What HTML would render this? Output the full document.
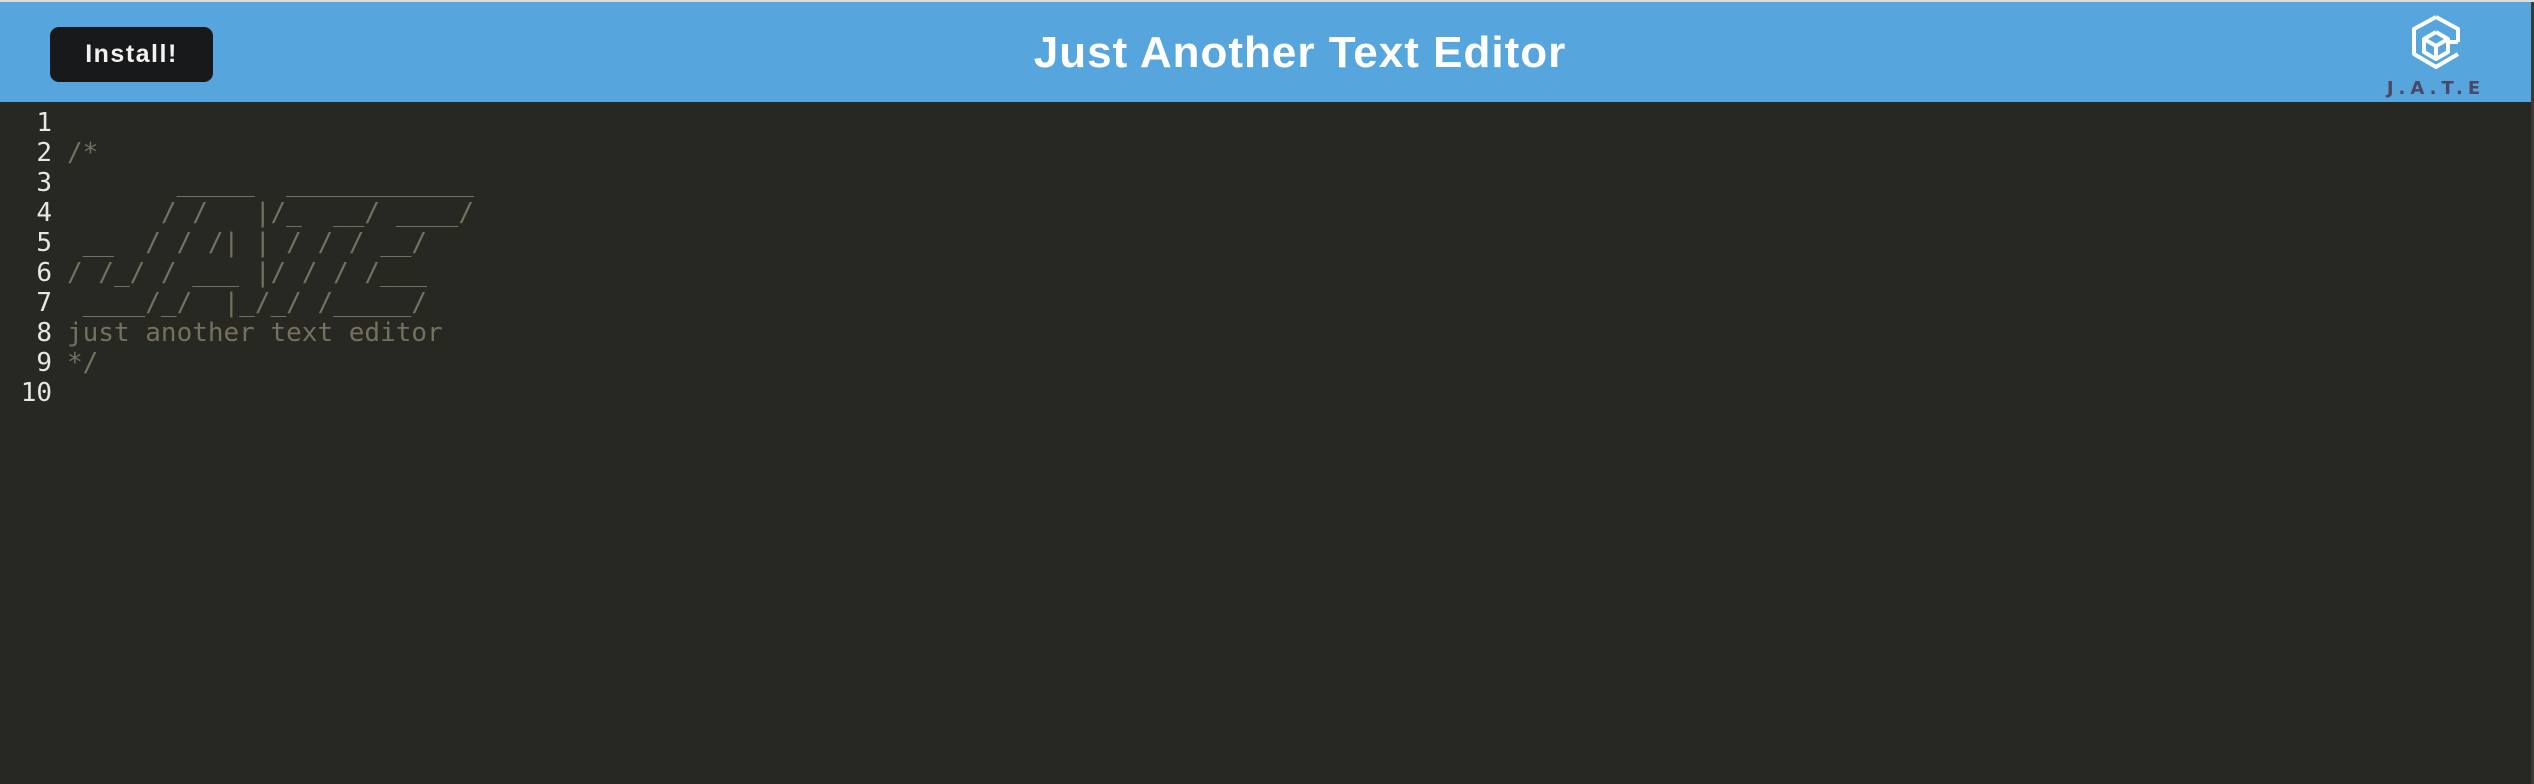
<!DOCTYPE html>
<html><head><meta charset="utf-8"><style>
html,body{margin:0;padding:0;width:2534px;height:784px;overflow:hidden;background:#272822;}
.top{position:absolute;left:0;top:0;width:2534px;height:2px;background:#dcdcdc;}
.hdr{position:absolute;left:0;top:2px;width:2534px;height:100px;background:#56a6dd;}
.btn{position:absolute;left:50px;top:27px;width:163px;height:55px;background:#18191a;border-radius:9px;color:#f2f2f2;font:bold 25px "Liberation Sans",sans-serif;text-align:center;line-height:55px;letter-spacing:1.5px;}
.title{position:absolute;left:33px;width:2534px;top:28px;text-align:center;color:#fff;font:bold 44px "Liberation Sans",sans-serif;line-height:50px;letter-spacing:1px;}
.jate{position:absolute;left:2384px;top:78px;width:104px;text-align:center;color:#4a4866;font:bold 18px "DejaVu Sans",sans-serif;letter-spacing:5px;}
.gut{position:absolute;left:0;top:108px;width:52px;text-align:right;color:#e8e8e2;font:26px "DejaVu Sans Mono","Liberation Mono",monospace;line-height:30px;white-space:pre;}
.code{position:absolute;left:67px;top:108px;color:#75715e;font:26px "DejaVu Sans Mono","Liberation Mono",monospace;line-height:30px;white-space:pre;}
.sb{position:absolute;left:2531px;top:2px;width:3px;height:782px;background:#3a3a36;}
</style></head><body>
<div class="top"></div>
<div class="hdr"></div>
<div class="btn">Install!</div>
<div class="title">Just Another Text Editor</div>
<svg style="position:absolute;left:2410px;top:14px" width="52" height="58" viewBox="0 0 52 58">
<g fill="none" stroke="#fff" stroke-width="4" stroke-linejoin="round">
<path d="M26 3 L48 15 L48 28 M48 40 L26 53 L4 40 L4 15 L26 3"/>
<path d="M26 18 L38 25 L38 38 L26 45 L14 38 L14 25 L26 18"/>
<path d="M14 25 L26 32 L38 25 M26 32 L26 45"/>
<path d="M48 28 L40 28"/>
</g></svg>
<div class="jate">J.A.T.E</div>
<div class="gut"> 1
 2
 3
 4
 5
 6
 7
 8
 9
10</div>
<div class="code">
/*
       _____  ____________
      / /   |/_  __/ ____/
 __  / / /| | / / / __/
/ /_/ / ___ |/ / / /___
 ____/_/  |_/_/ /_____/
just another text editor
*/
</div>
<div class="sb"></div>
</body></html>
